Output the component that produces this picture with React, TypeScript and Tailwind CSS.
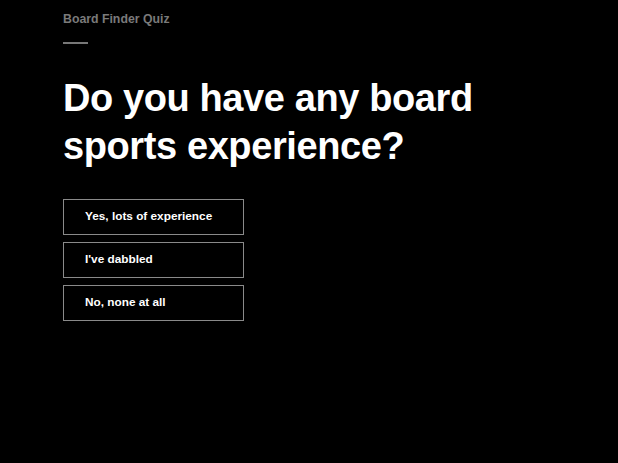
import React from 'react';

const options = ['Yes, lots of experience', "I've dabbled", 'No, none at all'];

export default function App() {
    return (
        <div className="min-h-screen w-full bg-black font-['Liberation_Sans',Arial,sans-serif] text-white">
            <div className="pl-[63px] pt-[11px]">
                {/* Quiz label */}
                <div className="text-[12.3px] font-bold leading-[16px] text-[#7a7a7a]">Board Finder Quiz</div>
                <div className="mt-[15px] h-[2px] w-[25px] bg-[#777]" />

                {/* Question */}
                <h1 className="mt-[30px] w-[440px] text-[38px] font-bold leading-[48px] tracking-[-0.4px]">
                    Do you have any board sports experience?
                </h1>

                {/* Answers */}
                <div className="mt-[29px] flex flex-col gap-[7px]">
                    {options.map(opt => (
                        <button
                            key={opt}
                            className="flex h-[36px] w-[181px] items-center border-[1.5px] border-[#8a8a8a] bg-black pl-[21px] text-left text-[11.8px] font-bold text-white"
                        >
                            {opt}
                        </button>
                    ))}
                </div>
            </div>
        </div>
    );
}
